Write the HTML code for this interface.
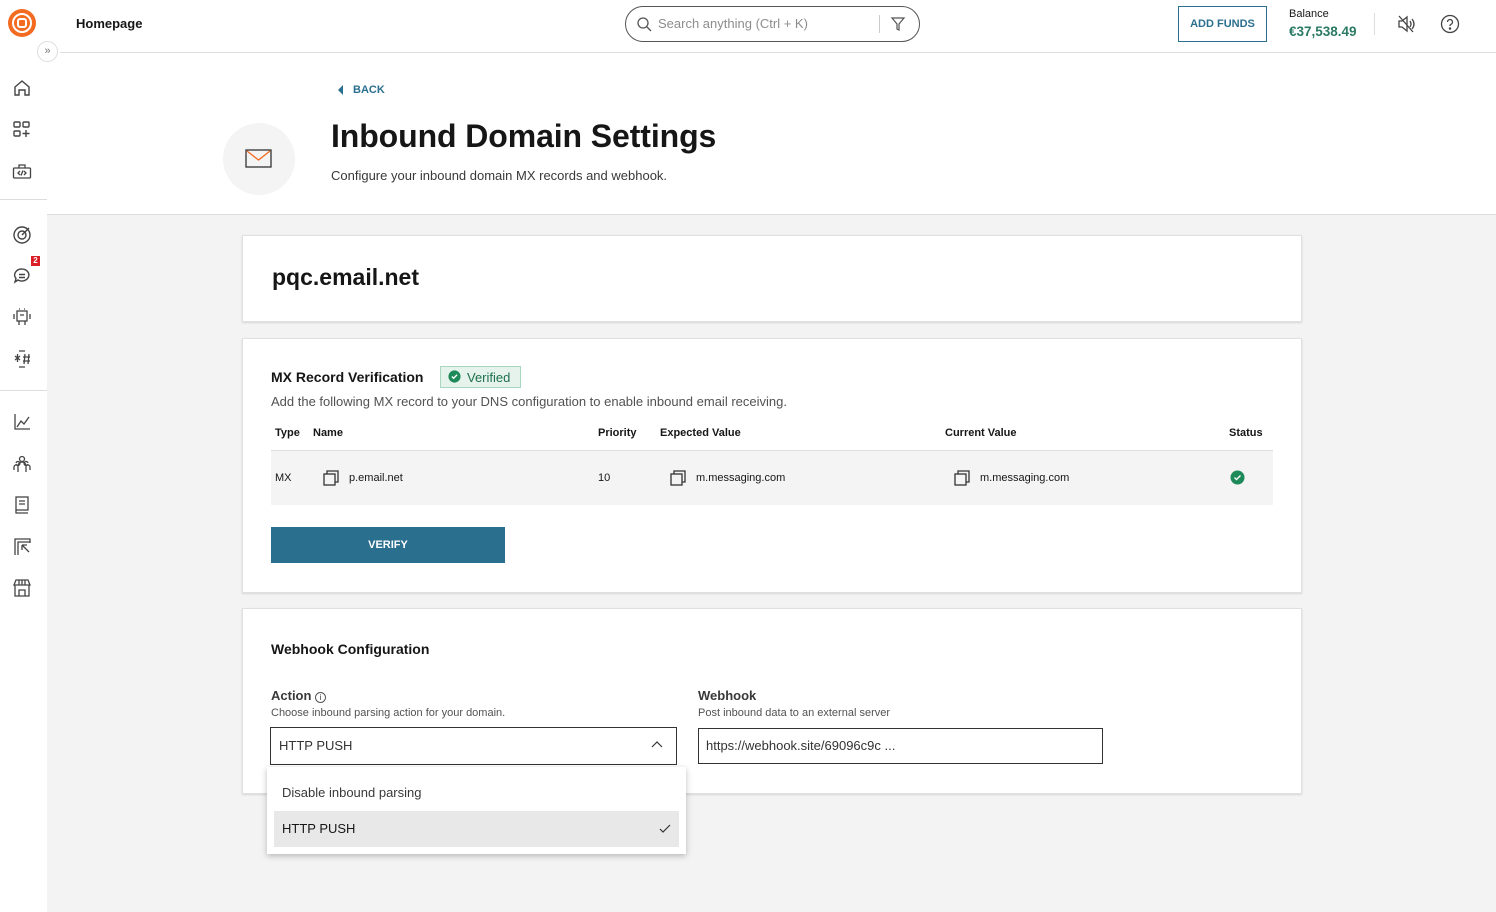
<!DOCTYPE html>
<html><head><meta charset="utf-8"><style>
*{box-sizing:border-box;margin:0;padding:0}
body{width:1496px;height:912px;overflow:hidden;font-family:"Liberation Sans",Arial,sans-serif;color:#161616;background:#fff;position:relative}
.abs{position:absolute}
.side{left:0;top:0;width:47px;height:912px;background:#fff}
.main{left:47px;top:214px;width:1449px;height:698px;background:#f3f3f3;border-top:1px solid #ddd}
.card{position:absolute;left:242px;width:1060px;background:#fff;border:1px solid #e0e0e0;box-shadow:0 1px 2px rgba(0,0,0,.12)}
svg{display:block}
.th{position:absolute;top:427px;font-size:11px;font-weight:bold}
.td{position:absolute;top:472px;font-size:11px}
.cp{position:absolute;top:470px;width:16px;height:16px}
</style></head><body>
<div class="abs side"></div>
<div class="abs" style="left:8px;top:9px;width:28px;height:28px;border-radius:50%;background:#f26b21"></div>
<div class="abs" style="left:12px;top:13px;width:20px;height:20px;border-radius:50%;border:2.5px solid #fff"></div>
<div class="abs" style="left:17px;top:18px;width:10px;height:10px;border-radius:3px;border:2.5px solid #fff"></div>
<div class="abs" style="left:76px;top:16px;font-size:13px;font-weight:bold">Homepage</div>
<div class="abs" style="left:60px;top:52px;width:1436px;border-top:1px solid #ddd"></div>
<div class="abs" style="left:37px;top:41px;width:21px;height:21px;border-radius:50%;background:#fff;border:1px solid #ddd;font-size:11px;color:#777;text-align:center;line-height:18px">»</div>
<div class="abs" style="left:0;top:199px;width:47px;border-top:1px solid #ddd"></div>
<div class="abs" style="left:0;top:390px;width:47px;border-top:1px solid #ddd"></div>
<svg class="abs" style="left:12px;top:78px" width="20" height="20" viewBox="0 0 20 20" fill="none" stroke="#444" stroke-width="1.4"><path d="M3 9l7-6 7 6v8h-4v-5H7v5H3z"/></svg>
<svg class="abs" style="left:12px;top:120px" width="20" height="20" viewBox="0 0 20 20" fill="none" stroke="#444" stroke-width="1.4"><rect x="2" y="2" width="6" height="5" rx="1"/><rect x="11" y="2" width="6" height="5" rx="1"/><rect x="2" y="11" width="6" height="5" rx="1"/><path d="M14 10v7M10.5 13.5h7"/></svg>
<svg class="abs" style="left:12px;top:162px" width="20" height="20" viewBox="0 0 20 20" fill="none" stroke="#444" stroke-width="1.3"><rect x="1.5" y="6" width="17" height="10" rx="1"/><path d="M7 6V3h6v3M8 9l-2 2 2 2M12 9l2 2-2 2M11 8.5l-2 5"/></svg>
<svg class="abs" style="left:12px;top:225px" width="20" height="20" viewBox="0 0 20 20" fill="none" stroke="#444" stroke-width="1.4"><circle cx="10" cy="10" r="8"/><circle cx="10" cy="10" r="4"/><path d="M10 10l7-7"/></svg>
<svg class="abs" style="left:12px;top:266px" width="20" height="20" viewBox="0 0 20 20" fill="none" stroke="#444" stroke-width="1.4"><path d="M10 3a7 6 0 1 1-4 11l-3 2 1-3.5A7 6 0 0 1 10 3z"/><path d="M7 8.5h6M7 11.5h6"/></svg>
<div class="abs" style="left:31px;top:256px;width:9px;height:10px;background:#da1e28;color:#fff;font-size:8px;font-weight:bold;text-align:center;line-height:10px">2</div>
<svg class="abs" style="left:12px;top:307px" width="20" height="20" viewBox="0 0 20 20" fill="none" stroke="#444" stroke-width="1.3"><rect x="5" y="4" width="10" height="10"/><path d="M2 7v5M18 7v5M7 14v4M13 14v4M8 8h4M7 2h1M12 2h1"/></svg>
<svg class="abs" style="left:12px;top:349px" width="20" height="20" viewBox="0 0 20 20" fill="none" stroke="#444" stroke-width="1.3"><path d="M7 2h6M7 18h6M3 7l5 4M8 7l-5 4M5.5 5v8M11 8h7M11 12h7M13 5l-1 10M17 5l-1 10"/></svg>
<svg class="abs" style="left:12px;top:412px" width="20" height="20" viewBox="0 0 20 20" fill="none" stroke="#444" stroke-width="1.3"><path d="M3 2v15h15M5 15l4-6 3 3 5-7"/></svg>
<svg class="abs" style="left:12px;top:454px" width="20" height="20" viewBox="0 0 20 20" fill="none" stroke="#444" stroke-width="1.3"><circle cx="10" cy="5" r="2.5"/><path d="M6 18v-6a4 4 0 0 1 8 0v6M4 10a2 2 0 1 0 0-1M2 16v-3a2 2 0 0 1 2-2M16 10a2 2 0 1 1 0-1M18 16v-3a2 2 0 0 0-2-2"/></svg>
<svg class="abs" style="left:12px;top:495px" width="20" height="20" viewBox="0 0 20 20" fill="none" stroke="#444" stroke-width="1.3"><rect x="4" y="2" width="12" height="13"/><path d="M4 15v3h12M7 6h6M7 9h6"/></svg>
<svg class="abs" style="left:12px;top:537px" width="20" height="20" viewBox="0 0 20 20" fill="none" stroke="#444" stroke-width="1.3"><path d="M3 18V2h15v4M6 18V5h12M10 8l7 7M10 8v5M10 8h5"/></svg>
<svg class="abs" style="left:12px;top:578px" width="20" height="20" viewBox="0 0 20 20" fill="none" stroke="#444" stroke-width="1.3"><path d="M2 7l2-5h12l2 5zM3 7v11h14V7M7 18v-6h6v6M7 2v5M10 2v5M13 2v5"/></svg>

<div class="abs" style="left:625px;top:6px;width:295px;height:36px;border:1px solid #555;border-radius:18px"></div>
<svg class="abs" style="left:636px;top:16px" width="16" height="16" viewBox="0 0 16 16" fill="none" stroke="#555" stroke-width="1.3"><circle cx="7" cy="7" r="5"/><path d="M11 11l4 4"/></svg>
<div class="abs" style="left:658px;top:16px;font-size:13px;color:#8d8d8d">Search anything (Ctrl + K)</div>
<div class="abs" style="left:879px;top:15px;height:18px;border-left:1px solid #ccc"></div>
<svg class="abs" style="left:890px;top:16px" width="16" height="16" viewBox="0 0 16 16" fill="none" stroke="#555" stroke-width="1.2"><path d="M2 2h12l-5 6v6l-2-1V8z"/></svg>
<div class="abs" style="left:1178px;top:6px;width:89px;height:36px;border:1px solid #2b6f8e;color:#2b6f8e;font-size:11px;font-weight:bold;text-align:center;line-height:34px">ADD FUNDS</div>
<div class="abs" style="left:1289px;top:8px;font-size:11px">Balance</div>
<div class="abs" style="left:1289px;top:24px;font-size:13.5px;font-weight:bold;color:#2b7a64">€37,538.49</div>
<div class="abs" style="left:1374px;top:13px;height:22px;border-left:1px solid #ddd"></div>
<svg class="abs" style="left:1397px;top:14px" width="20" height="20" viewBox="0 0 20 20" fill="none" stroke="#444" stroke-width="1.3"><path d="M2 7h3l5-4v14l-5-4H2zM13 7q2 3 0 6M15 5q4 5 0 10M2 2l14 16"/></svg>
<svg class="abs" style="left:1440px;top:14px" width="20" height="20" viewBox="0 0 20 20" fill="none" stroke="#444" stroke-width="1.3"><circle cx="10" cy="10" r="8.5"/><path d="M7.5 8a2.5 2.5 0 1 1 3.5 2.3c-.7.3-1 .8-1 1.7"/><circle cx="10" cy="14.5" r=".6" fill="#444"/></svg>

<svg class="abs" style="left:336px;top:84px" width="8" height="12" viewBox="0 0 8 12"><path d="M7 1L2 6l5 5z" fill="#2b6f8e"/></svg>
<div class="abs" style="left:353px;top:84px;font-size:11px;font-weight:bold;color:#2b6f8e">BACK</div>
<div class="abs" style="left:223px;top:123px;width:72px;height:72px;border-radius:50%;background:#f4f4f4"></div>
<svg class="abs" style="left:245px;top:148px" width="28" height="22" viewBox="0 0 28 22" fill="none"><rect x="1" y="2" width="25" height="17" stroke="#333" stroke-width="1.3"/><path d="M2 3l11.5 9L25 3" stroke="#f26b21" stroke-width="1.3"/></svg>
<div class="abs" style="left:331px;top:118px;font-size:32px;font-weight:bold;letter-spacing:-.1px">Inbound Domain Settings</div>
<div class="abs" style="left:331px;top:168px;font-size:13px;color:#393939">Configure your inbound domain MX records and webhook.</div>

<div class="abs main"></div>
<div class="card" style="top:235px;height:87px"><div style="position:absolute;left:29px;top:28px;font-size:23px;font-weight:bold">pqc.email.net</div></div>
<div class="card" style="top:338px;height:255px"></div>
<div class="abs" style="left:271px;top:369px;font-size:14px;font-weight:bold">MX Record Verification</div>
<div class="abs" style="left:440px;top:366px;width:81px;height:22px;background:#e5f3ec;border:1px solid #a7d8bf;font-size:13px;color:#1e6f4c;padding:3px 0 0 26px">Verified</div>
<svg class="abs" style="left:448px;top:370px" width="13" height="13" viewBox="0 0 15 15"><circle cx="7.5" cy="7.5" r="7" fill="#1e8a5a"/><path d="M4.5 7.5l2 2 4-4" stroke="#fff" stroke-width="1.6" fill="none"/></svg>
<div class="abs" style="left:271px;top:394px;font-size:13px;color:#525252">Add the following MX record to your DNS configuration to enable inbound email receiving.</div>
<div class="th" style="left:275px">Type</div><div class="th" style="left:313px">Name</div><div class="th" style="left:598px">Priority</div><div class="th" style="left:660px">Expected Value</div><div class="th" style="left:945px">Current Value</div><div class="th" style="left:1229px">Status</div>
<div class="abs" style="left:271px;top:450px;width:1002px;height:55px;background:#f4f4f4;border-top:1px solid #ddd"></div>
<div class="td" style="left:275px">MX</div>
<svg class="cp" style="left:323px" viewBox="0 0 16 16" fill="none" stroke="#333" stroke-width="1.3"><rect x="1" y="4" width="11" height="11"/><path d="M4 4V1h11v11h-3"/></svg>
<div class="td" style="left:349px">p.email.net</div>
<div class="td" style="left:598px">10</div>
<svg class="cp" style="left:670px" viewBox="0 0 16 16" fill="none" stroke="#333" stroke-width="1.3"><rect x="1" y="4" width="11" height="11"/><path d="M4 4V1h11v11h-3"/></svg>
<div class="td" style="left:696px">m.messaging.com</div>
<svg class="cp" style="left:954px" viewBox="0 0 16 16" fill="none" stroke="#333" stroke-width="1.3"><rect x="1" y="4" width="11" height="11"/><path d="M4 4V1h11v11h-3"/></svg>
<div class="td" style="left:980px">m.messaging.com</div>
<svg class="abs" style="left:1230px;top:470px" width="15" height="15" viewBox="0 0 15 15"><circle cx="7.5" cy="7.5" r="7" fill="#1e8a5a"/><path d="M4.5 7.5l2 2 4-4" stroke="#fff" stroke-width="1.4" fill="none"/></svg>
<div class="abs" style="left:271px;top:527px;width:234px;height:36px;background:#2b6f8e;color:#fff;font-size:11px;font-weight:bold;text-align:center;line-height:36px">VERIFY</div>

<div class="card" style="top:608px;height:186px"></div>
<div class="abs" style="left:271px;top:641px;font-size:14px;font-weight:bold">Webhook Configuration</div>
<div class="abs" style="left:271px;top:688px;font-size:13px;font-weight:bold;color:#393939">Action <span style="display:inline-block;width:11px;height:11px;border:1px solid #555;border-radius:50%;font-size:8px;text-align:center;line-height:10px;font-weight:normal">i</span></div>
<div class="abs" style="left:271px;top:707px;font-size:11px;color:#525252">Choose inbound parsing action for your domain.</div>
<div class="abs" style="left:270px;top:727px;width:407px;height:38px;border:1px solid #333;background:#fff;font-size:13px;padding:10px 0 0 8px;color:#333">HTTP PUSH</div>
<svg class="abs" style="left:651px;top:740px" width="12" height="10" viewBox="0 0 12 10" fill="none" stroke="#333" stroke-width="1.2"><path d="M1 7l5-5 5 5"/></svg>
<div class="abs" style="left:698px;top:688px;font-size:13px;font-weight:bold;color:#393939">Webhook</div>
<div class="abs" style="left:698px;top:707px;font-size:11px;color:#525252">Post inbound data to an external server</div>
<div class="abs" style="left:698px;top:728px;width:405px;height:36px;border:1px solid #333;background:#fff;font-size:13px;padding:9px 0 0 7px;color:#333">https://webhook.site/69096c9c ...</div>
<div class="abs" style="left:267px;top:767px;width:419px;height:87px;background:#fff;box-shadow:0 2px 6px rgba(0,0,0,.25)"></div>
<div class="abs" style="left:282px;top:785px;font-size:13px;color:#393939">Disable inbound parsing</div>
<div class="abs" style="left:274px;top:811px;width:405px;height:36px;background:#e8e8e8"></div>
<div class="abs" style="left:282px;top:821px;font-size:13px;color:#161616">HTTP PUSH</div>
<svg class="abs" style="left:659px;top:824px" width="12" height="10" viewBox="0 0 12 10" fill="none" stroke="#333" stroke-width="1.2"><path d="M1 5l3 3 7-7"/></svg>
</body></html>
